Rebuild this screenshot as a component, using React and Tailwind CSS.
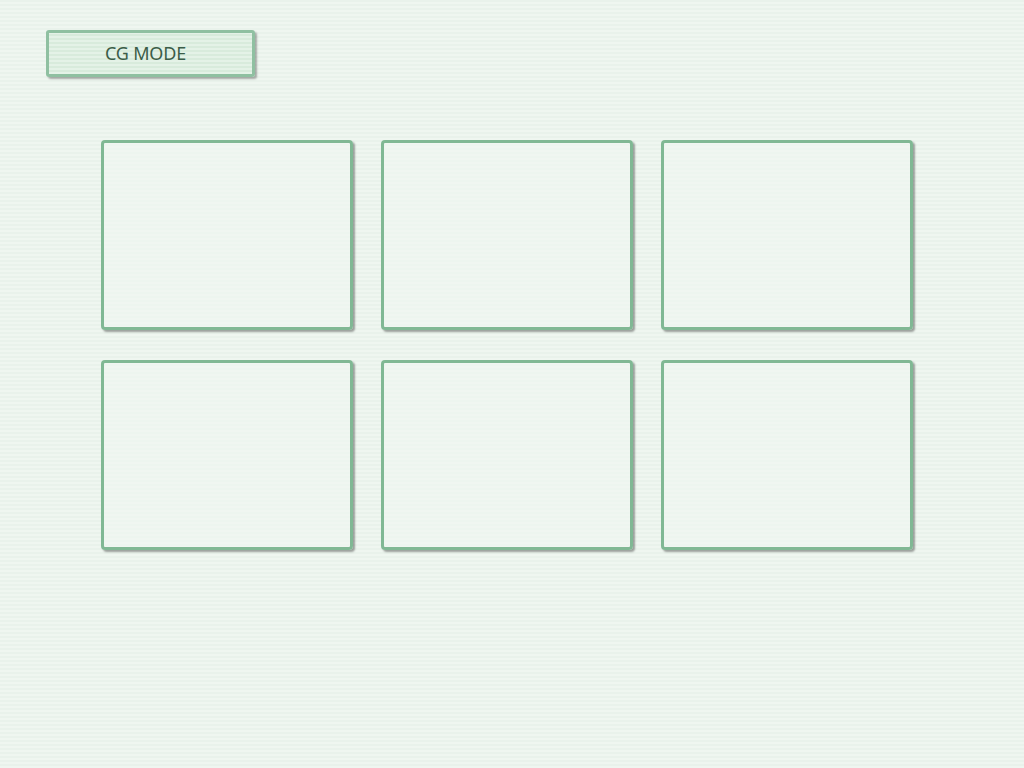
export default function App() {
  const cards = [0, 1, 2, 3, 4, 5];
  return (
    <div className="w-full h-[768px] overflow-hidden bg-[#eef5ef] bg-[repeating-linear-gradient(0deg,#eff6f0_0px,#eff6f0_2px,#e9f2eb_2px,#e9f2eb_4px)] font-['Noto_Sans',sans-serif]">
      <div className="pt-[30px] pl-[46px]">
        <button className="w-[209px] h-[47px] flex items-center justify-center pr-[10px] rounded-[3px] border-[3px] border-[#8fc0a1] bg-[repeating-linear-gradient(0deg,#e4f2e7_0px,#e4f2e7_2px,#d8ebdc_2px,#d8ebdc_4px)] shadow-[2px_2px_2px_rgba(0,0,0,0.3)] text-[18px] text-[#3b5d48] tracking-[-0.2px]">
          CG MODE
        </button>
      </div>
      <div className="mt-[63px] ml-[101px] grid grid-cols-[repeat(3,252px)] gap-x-[28px] gap-y-[30px]">
        {cards.map((c) => (
          <div
            key={c}
            className="h-[190px] rounded-[4px] border-[3px] border-[#80b894] bg-[#f0f7f1]/60 shadow-[2px_2px_2px_rgba(0,0,0,0.35)]"
          />
        ))}
      </div>
    </div>
  );
}
